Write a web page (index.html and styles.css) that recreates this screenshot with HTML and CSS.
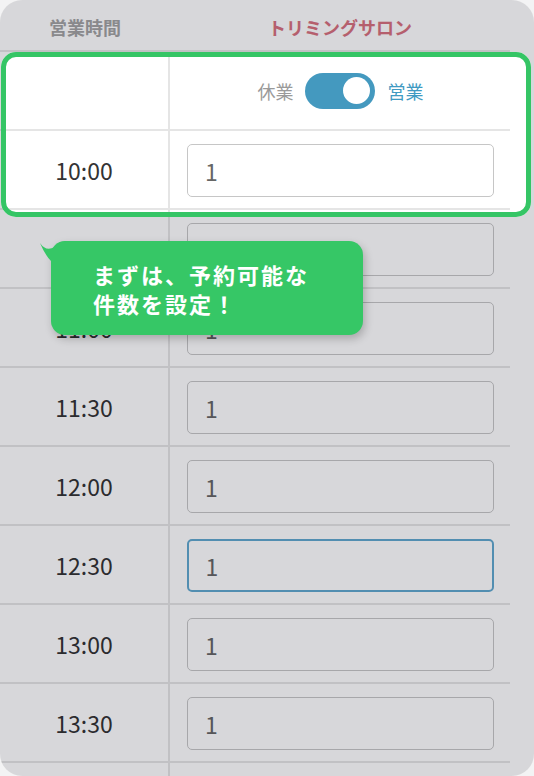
FILE: index.html
```html
<!DOCTYPE html>
<html lang="ja">
<head>
<meta charset="utf-8">
<title>営業時間</title>
<link rel="stylesheet" href="styles.css">
</head>
<body>
<div class="card">
  <div class="table">
    <div class="head">
      <div class="hcell hcell-time">営業時間</div>
      <div class="hcell hcell-salon">トリミングサロン</div>
    </div>
    <div class="row">
      <div class="tcell"></div>
      <div class="icell switch-cell">
        <span class="lbl-off">休業</span>
        <span class="switch"><span class="knob"></span></span>
        <span class="lbl-on">営業</span>
      </div>
    </div>
    <div class="row"><div class="tcell">10:00</div><div class="icell"><input class="field" value="1"></div></div>
    <div class="row"><div class="tcell">10:30</div><div class="icell"><input class="field" value="1"></div></div>
    <div class="row"><div class="tcell">11:00</div><div class="icell"><input class="field" value="1"></div></div>
    <div class="row"><div class="tcell">11:30</div><div class="icell"><input class="field" value="1"></div></div>
    <div class="row"><div class="tcell">12:00</div><div class="icell"><input class="field" value="1"></div></div>
    <div class="row"><div class="tcell">12:30</div><div class="icell"><input class="field field-focus" value="1"></div></div>
    <div class="row"><div class="tcell">13:00</div><div class="icell"><input class="field" value="1"></div></div>
    <div class="row"><div class="tcell">13:30</div><div class="icell"><input class="field" value="1"></div></div>
    <div class="row"><div class="tcell"></div><div class="icell"></div></div>
  </div>
  <div class="spot"></div>
  <div class="tip">
    <svg class="tail" viewBox="0 0 30 30" width="30" height="30"><path d="M1 2 Q9 14 22 1 L30 0 L30 30 L12 30 L12 20 Q6 14 1 2 Z" fill="#36c766"/></svg>
    <p>まずは、予約可能な<br>件数を設定！</p>
  </div>
</div>
</body>
</html>
```
FILE: styles.css
```css
body {
  margin: 0;
  background: #f3f3f4;
  font-family: "Noto Sans CJK JP", "Noto Sans", sans-serif;
}
.card {
  position: relative;
  width: 534px;
  height: 776px;
  border-radius: 22px;
  overflow: hidden;
  background: #fff;
}
.table {
  width: 510px;
}
.head {
  display: flex;
  align-items: center;
  height: 52px;
  box-sizing: border-box;
  padding-top: 3px;
  border-bottom: 2px solid #e5e5e5;
}
.hcell {
  font-size: 18px;
  font-weight: 700;
  text-align: center;
}
.hcell-time {
  width: 170px;
  color: #a3a3a3;
}
.hcell-salon {
  flex: 1;
  color: #d7717e;
}
.row {
  display: flex;
  height: 79px;
  box-sizing: border-box;
  border-bottom: 2px solid #e5e5e5;
}
.tcell {
  width: 170px;
  box-sizing: border-box;
  border-right: 2px solid #e5e5e5;
  display: flex;
  align-items: center;
  justify-content: center;
  font-size: 23px;
  color: #333;
}
.icell {
  flex: 1;
  display: flex;
  align-items: center;
  padding: 0 16px 0 17px;
}
.field {
  width: 100%;
  height: 53px;
  box-sizing: border-box;
  border: 1.5px solid #c6c6c6;
  border-radius: 5px;
  padding: 0 0 0 17px;
  margin-top: 2px;
  font-family: inherit;
  font-size: 23px;
  color: #666;
  background: transparent;
  outline: none;
}
.field-focus {
  border: 2px solid #62a9cf;
  padding-left: 16.5px;
}
.switch-cell {
  justify-content: center;
  font-size: 18px;
}
.lbl-off {
  color: #9a9a9a;
}
.lbl-on {
  color: #3f9ac2;
}
.switch {
  position: relative;
  width: 70px;
  height: 36px;
  border-radius: 18px;
  background: #4499bf;
  margin: 0 13px 0 11px;
}
.knob {
  position: absolute;
  right: 5px;
  top: 4.5px;
  width: 27px;
  height: 27px;
  border-radius: 50%;
  background: #fff;
}
.spot {
  position: absolute;
  left: 1px;
  top: 52px;
  width: 530px;
  height: 165px;
  box-sizing: border-box;
  border: 5px solid #35c565;
  border-radius: 15px;
  box-shadow: 0 0 0 900px rgba(0, 0, 16, 0.155);
  z-index: 1;
  pointer-events: none;
}
.tip {
  position: absolute;
  left: 51px;
  top: 241px;
  width: 312px;
  height: 94px;
  box-sizing: border-box;
  padding: 19px 0 0 42px;
  background: #36c766;
  border-radius: 14px;
  box-shadow: 2px 4px 8px rgba(0, 0, 0, 0.22);
  z-index: 2;
}
.tail {
  position: absolute;
  left: -12px;
  top: 0;
}
.tip p {
  margin: 0;
  color: #fff;
  font-weight: 700;
  font-size: 22px;
  line-height: 29px;
  letter-spacing: 2px;
}
```
